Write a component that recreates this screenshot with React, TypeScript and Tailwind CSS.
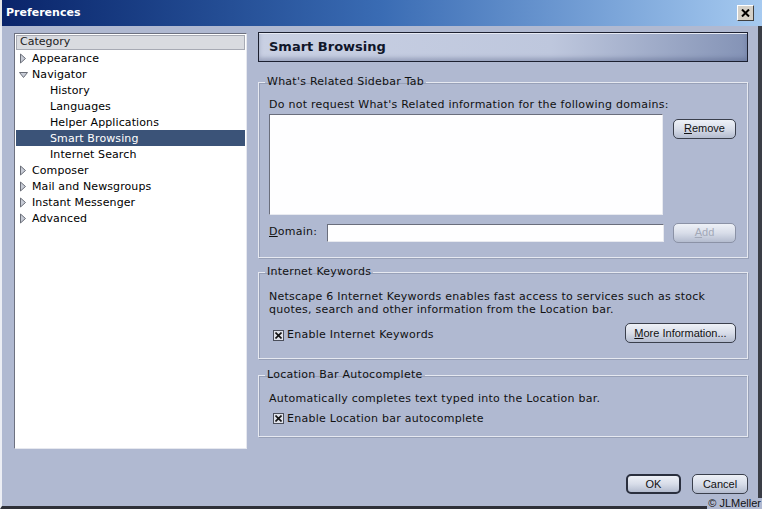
import React from 'react';

const ui = { fontFamily: '"DejaVu Sans", Verdana, sans-serif' };
const btnFont = { fontFamily: '"Liberation Sans", Arial, sans-serif' };

function Triangle({ open }: { open?: boolean }) {
  return (
    <svg width="9" height="11" viewBox="0 0 9 11" className="shrink-0">
      {open ? (
        <path d="M0.5 3.5 L8.5 3.5 L4.5 8.5 Z" fill="#c8ccd6" stroke="#6a6e78" strokeWidth="1" />
      ) : (
        <path d="M1.5 1 L6.5 5.5 L1.5 10 Z" fill="#c8ccd6" stroke="#6a6e78" strokeWidth="1" />
      )}
    </svg>
  );
}

function TreeRow({
  label,
  level,
  arrow,
  selected,
}: {
  label: string;
  level: 0 | 1;
  arrow?: 'open' | 'closed';
  selected?: boolean;
}) {
  return (
    <div
      className={`flex h-4 items-center text-[11px] tracking-[0.1px] ${selected ? 'bg-[#3b5378] text-white' : 'text-black'} ${level === 0 ? 'pl-[3px]' : 'pl-[34px]'}`}
    >
      {level === 0 && (
        <span className="mr-[4px] flex w-[9px] items-center">
          <Triangle open={arrow === 'open'} />
        </span>
      )}
      <span className="leading-none">{label}</span>
    </div>
  );
}

function Button({
  children,
  width,
  disabled,
  isDefault,
}: {
  children: React.ReactNode;
  width: string;
  disabled?: boolean;
  isDefault?: boolean;
}) {
  return (
    <div
      style={btnFont}
      className={`${width} flex h-[20px] items-center justify-center rounded-[5px] bg-gradient-to-b from-[#eef1f7] via-[#d8dde9] to-[#b4bccf] text-[11px] tracking-normal ${
        disabled ? 'border border-[#8b92a6] text-[#a3a9b8]' : 'text-[#111]'
      } ${isDefault ? 'border-2 border-[#2a2f3e]' : disabled ? '' : 'border border-[#3a3f4c]'}`}
    >
      {children}
    </div>
  );
}

function Check({ label }: { label: string }) {
  return (
    <div className="flex items-center text-[11px] text-[#111]">
      <span className="mr-[3px] flex h-[11px] w-[11px] items-center justify-center border border-[#4a4e5a] bg-[#dfe2ea]">
        <svg width="7" height="7" viewBox="0 0 7 7">
          <path d="M0.5 0.5 L6.5 6.5 M6.5 0.5 L0.5 6.5" stroke="#111" strokeWidth="1.6" />
        </svg>
      </span>
      {label}
    </div>
  );
}

function Group({ title, children, className }: { title: string; children: React.ReactNode; className?: string }) {
  return (
    <fieldset
      className={`border border-[#e6e9f1] tracking-[0.25px] shadow-[inset_1px_1px_0_#98a1b8,1px_1px_0_#98a1b8] ${className ?? ''}`}
    >
      <legend className="-ml-[4px] px-[2px] text-[11px] leading-[14px] text-[#111]">{title}</legend>
      {children}
    </fieldset>
  );
}

export default function App() {
  return (
    <div style={ui} className="relative flex h-[509px] w-[762px] flex-col overflow-hidden bg-[#b0b9d1]">
      {/* Title bar */}
      <div className="flex h-[26px] shrink-0 items-center justify-between border-l-2 border-l-[#e4e4e4] bg-gradient-to-r from-[#0a246a] via-[#3a6cb4] to-[#a6caf0] pl-[4px] pr-[8px]">
        <span className="text-[11px] font-bold text-white">Preferences</span>
        <div className="flex h-[16px] w-[17px] items-center justify-center border border-t-white border-l-white border-r-[#404040] border-b-[#404040] bg-[#d4d0c8]">
          <svg width="9" height="8" viewBox="0 0 9 8">
            <path d="M1 0.5 L8 7.5 M8 0.5 L1 7.5" stroke="#000" strokeWidth="2" />
          </svg>
        </div>
      </div>

      {/* Body */}
      <div className="flex min-h-0 flex-1 flex-col border-l-2 border-r-4 border-b-[3px] border-l-[#eceef4] border-r-[#3a3d46] border-b-[#2e3038] pl-[12px] pr-[10px]">
        <div className="flex gap-[11px] pt-[7px]">
          {/* Category tree */}
          <div className="flex h-[416px] w-[233px] flex-col border border-t-[#6d7180] border-l-[#6d7180] border-r-[#e6e8ef] border-b-[#e6e8ef] bg-white p-px">
            <div className="flex h-[15px] shrink-0 items-center border border-[#a7aab4] bg-[#d9dbe0] pl-[3px] text-[11px] text-[#222]">
              Category
            </div>
            <TreeRow label="Appearance" level={0} arrow="closed" />
            <TreeRow label="Navigator" level={0} arrow="open" />
            <TreeRow label="History" level={1} />
            <TreeRow label="Languages" level={1} />
            <TreeRow label="Helper Applications" level={1} />
            <TreeRow label="Smart Browsing" level={1} selected />
            <TreeRow label="Internet Search" level={1} />
            <TreeRow label="Composer" level={0} arrow="closed" />
            <TreeRow label="Mail and Newsgroups" level={0} arrow="closed" />
            <TreeRow label="Instant Messenger" level={0} arrow="closed" />
            <TreeRow label="Advanced" level={0} arrow="closed" />
          </div>

          {/* Right column */}
          <div className="flex w-[490px] flex-col">
            <div className="-mt-[1px] flex h-[30px] items-center border border-[#1c2030] bg-[linear-gradient(to_right,#c9d0e3_0%,#bec7dd_60%,#8493b6_100%)] pl-[10px] shadow-[inset_0_1px_0_#e6eaf4,inset_0_-3px_4px_rgba(70,80,120,0.35)]">
              <span className="text-[13px] font-bold text-[#10162a]">Smart Browsing</span>
            </div>

            <Group title="What's Related Sidebar Tab" className="mt-[13px] h-[183px] pl-[10px] pr-[11px]">
              <div className="mt-[8px] text-[11px] text-[#111]">
                Do not request What's Related information for the following domains:
              </div>
              <div className="flex gap-[10px]">
                <div className="h-[101px] w-[394px] border border-t-[#6a6e7c] border-l-[#6a6e7c] border-r-[#e8eaf0] border-b-[#e8eaf0] bg-[#fefeff]" />
                <div className="pt-[5px]">
                  <Button width="w-[63px]">
                    <span><span className="underline">R</span>emove</span>
                  </Button>
                </div>
              </div>
              <div className="mt-[8px] flex items-center">
                <span className="w-[58px] text-[11px] text-[#111]">
                  <span className="underline">D</span>omain:
                </span>
                <div className="h-[18px] w-[337px] border border-t-[#6a6e7c] border-l-[#6a6e7c] border-r-[#e8eaf0] border-b-[#e8eaf0] bg-[#fefeff]" />
                <div className="ml-[9px]">
                  <Button width="w-[63px]" disabled>
                    <span><span className="underline">A</span>dd</span>
                  </Button>
                </div>
              </div>
            </Group>

            <Group title="Internet Keywords" className="mt-[7px] h-[94px] pl-[10px] pr-[11px]">
              <div className="mt-[11px] text-[11px] leading-[13px] text-[#111]">
                Netscape 6 Internet Keywords enables fast access to services such as stock
                <br />
                quotes, search and other information from the Location bar.
              </div>
              <div className="mt-[7px] flex items-center justify-between pl-[4px]">
                <div className="pt-[4px]">
                  <Check label="Enable Internet Keywords" />
                </div>
                <Button width="w-[111px]">
                  <span><span className="underline">M</span>ore Information...</span>
                </Button>
              </div>
            </Group>

            <Group title="Location Bar Autocomplete" className="mt-[9px] h-[69px] pl-[10px] pr-[11px]">
              <div className="mt-[9px] text-[11px] text-[#111]">
                Automatically completes text typed into the Location bar.
              </div>
              <div className="mt-[3px] pl-[4px]">
                <Check label="Enable Location bar autocomplete" />
              </div>
            </Group>
          </div>
        </div>

        <div className="mt-auto mb-[12px] flex justify-end gap-[11px]">
          <Button width="w-[55px]" isDefault>
            OK
          </Button>
          <Button width="w-[56px]">Cancel</Button>
        </div>
      </div>

      <span
        style={btnFont}
        className="absolute bottom-0 right-0 bg-[#b0b9d1] px-px text-[11px] leading-[11px] text-[#111]"
      >
        © JLMeller
      </span>
    </div>
  );
}
